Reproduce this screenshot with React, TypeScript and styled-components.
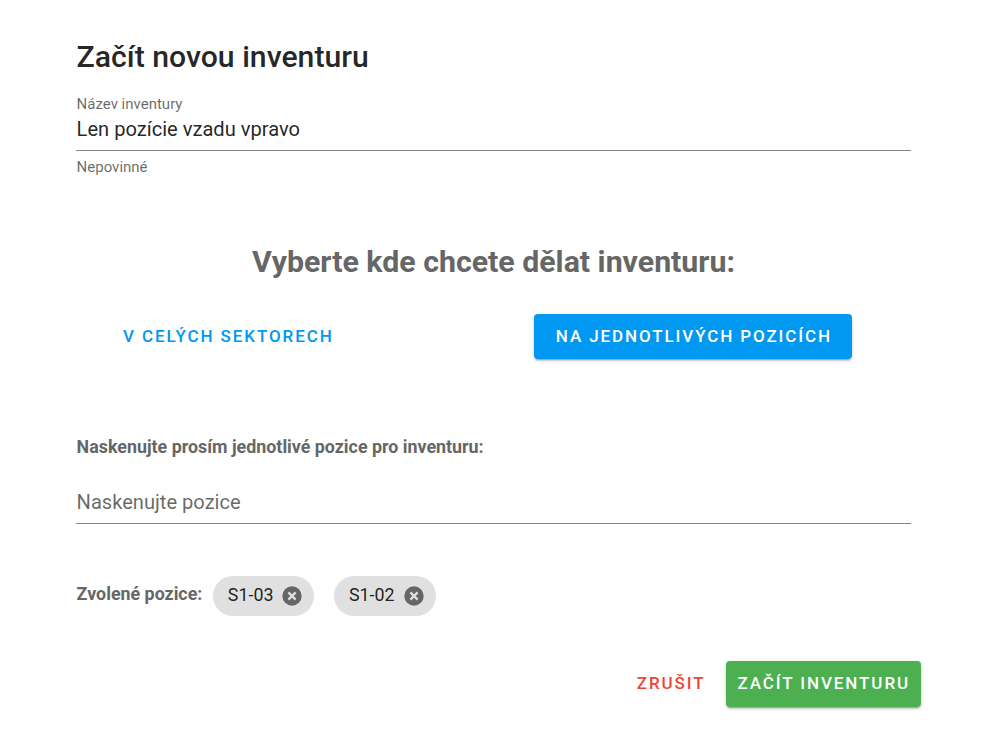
import React from "react";
import styled, { createGlobalStyle } from "styled-components";

const Global = createGlobalStyle`
  html, body { margin: 0; padding: 0; background: #fff; }
  body { font-family: Roboto, "Liberation Sans", sans-serif; }
`;

const Page = styled.div`
  width: 985px;
  height: 733px;
  box-sizing: border-box;
  padding: 37px 74px 0 76px;
  overflow: hidden;
`;

const Title = styled.h2`
  margin: 0;
  padding-left: 0.6px;
  font-size: 30.2px;
  line-height: 40px;
  font-weight: 500;
  color: rgba(0, 0, 0, 0.87);
`;

const Field = styled.div`
  margin-top: 19px;
  display: flex;
  flex-direction: column;
`;

const FieldLabel = styled.label`
  padding-left: 0.6px;
  font-size: 15px;
  line-height: 16px;
  color: rgba(0, 0, 0, 0.6);
`;

const FieldValue = styled.div<{ $placeholder?: boolean }>`
  height: 38px;
  padding-left: 0.6px;
  line-height: 34px;
  font-size: 20.1px;
  color: ${(p) => (p.$placeholder ? "rgba(0,0,0,0.6)" : "rgba(0,0,0,0.87)")};
  border-bottom: 1px solid rgba(0, 0, 0, 0.48);
  box-sizing: content-box;
`;

const Hint = styled.div`
  margin-top: 8px;
  padding-left: 0.6px;
  font-size: 15px;
  line-height: 16px;
  color: rgba(0, 0, 0, 0.6);
`;

const Question = styled.h3`
  margin: 67px 0 0;
  text-align: center;
  font-size: 30.3px;
  line-height: 40px;
  font-weight: 700;
  color: #666;
`;

const Choice = styled.div`
  margin-top: 32px;
  padding: 0 59px 0 25px;
  display: flex;
  justify-content: space-between;
`;

const Btn = styled.button<{ $bg?: string; $fg: string }>`
  border: 0;
  border-radius: 4px;
  font-family: inherit;
  font-weight: 500;
  font-size: 17px;
  letter-spacing: 1.9px;
  padding: 0 20px 2px 22px;
  height: 45px;
  white-space: nowrap;
  color: ${(p) => p.$fg};
  background: ${(p) => p.$bg ?? "transparent"};
  box-shadow: ${(p) =>
    p.$bg
      ? "0 3px 1px -2px rgba(0,0,0,.2), 0 2px 2px 0 rgba(0,0,0,.14), 0 1px 5px 0 rgba(0,0,0,.12)"
      : "none"};
`;

const ScanLabel = styled.div`
  margin-top: 76px;
  padding-left: 0.6px;
  font-size: 17.85px;
  line-height: 24px;
  font-weight: 700;
  color: #666;
`;

const ScanField = styled(FieldValue)`
  margin-top: 22px;
  height: 42px;
  line-height: 42px;
`;

const Selected = styled.div`
  margin-top: 52px;
  padding-left: 0.6px;
  display: flex;
  align-items: center;
  height: 40px;
`;

const SelectedLabel = styled.span`
  font-size: 17.85px;
  font-weight: 700;
  color: #666;
  margin-right: 11px;
  position: relative;
  top: -3px;
`;

const Chip = styled.span`
  display: inline-flex;
  align-items: center;
  height: 40px;
  box-sizing: border-box;
  padding: 0 12px 0 14.5px;
  border-radius: 20px;
  background: #e0e0e0;
  font-size: 17.85px;
  color: rgba(0, 0, 0, 0.87);
  margin-right: 20px;
  gap: 9px;
`;

const ChipLabel = styled.span`
  margin-bottom: 4px;
`;

const Actions = styled.div`
  margin-top: 45px;
  margin-right: -10px;
  display: flex;
  justify-content: flex-end;
  align-items: center;
  gap: 8px;
`;

const Cancel = styled(Btn)`
  padding: 0 12px 2px;
`;

const Submit = styled(Btn)`
  padding: 0 11px 2px 12px;
  height: 46px;
`;

function CancelIcon() {
  return (
    <svg width="20" height="20" viewBox="0 0 20 20" aria-hidden="true">
      <circle cx="10" cy="10" r="9.7" fill="#666" />
      <path d="M6.4 6.4l7.2 7.2M13.6 6.4l-7.2 7.2" stroke="#e0e0e0" strokeWidth="2.3" />
    </svg>
  );
}

export default function App() {
  return (
    <Page>
      <Global />
      <Title>Začít novou inventuru</Title>
      <Field>
        <FieldLabel>Název inventury</FieldLabel>
        <FieldValue>Len pozície vzadu vpravo</FieldValue>
        <Hint>Nepovinné</Hint>
      </Field>
      <Question>Vyberte kde chcete dělat inventuru:</Question>
      <Choice>
        <Btn $fg="#0098f0">V CELÝCH SEKTORECH</Btn>
        <Btn $fg="#fff" $bg="#0098f0">NA JEDNOTLIVÝCH POZICÍCH</Btn>
      </Choice>
      <ScanLabel>Naskenujte prosím jednotlivé pozice pro inventuru:</ScanLabel>
      <ScanField $placeholder>Naskenujte pozice</ScanField>
      <Selected>
        <SelectedLabel>Zvolené pozice:</SelectedLabel>
        <Chip><ChipLabel>S1-03</ChipLabel><CancelIcon /></Chip>
        <Chip><ChipLabel>S1-02</ChipLabel><CancelIcon /></Chip>
      </Selected>
      <Actions>
        <Cancel $fg="#f44336">ZRUŠIT</Cancel>
        <Submit $fg="#fff" $bg="#4caf50">ZAČÍT INVENTURU</Submit>
      </Actions>
    </Page>
  );
}
